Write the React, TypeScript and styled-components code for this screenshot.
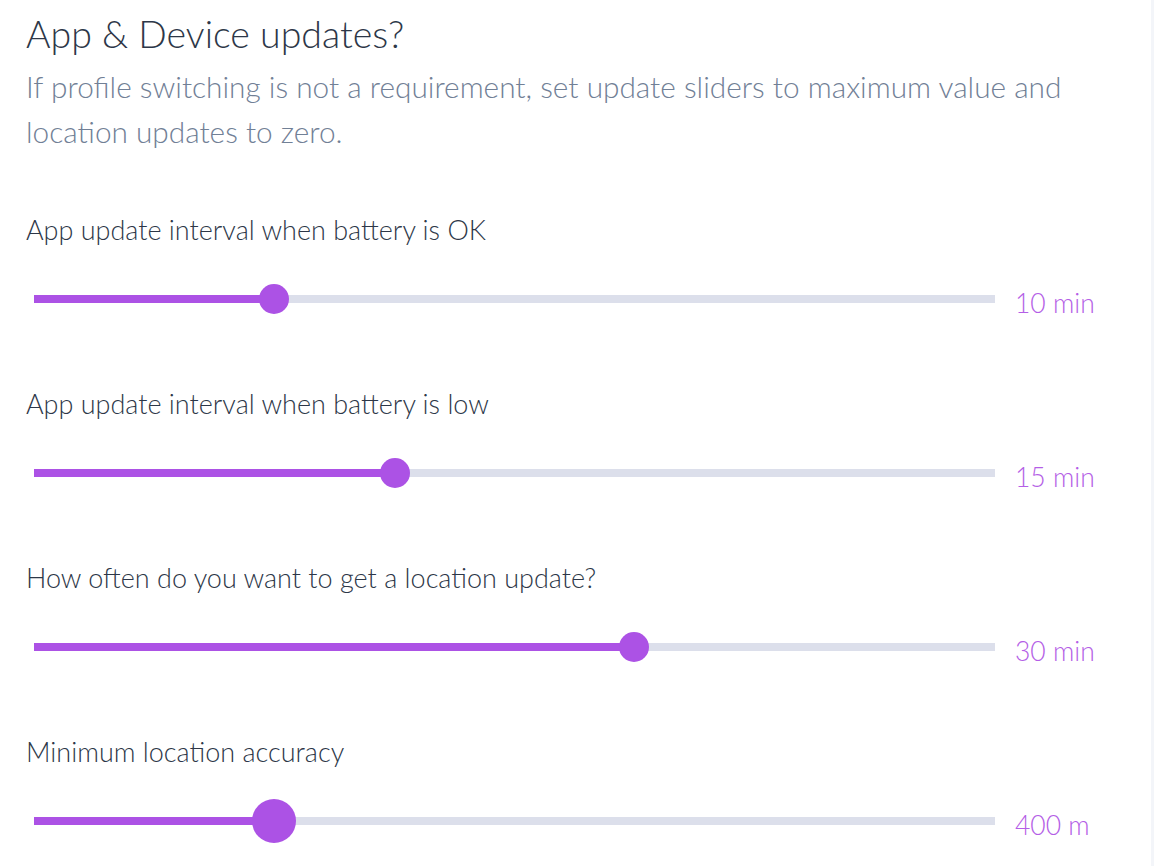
import React from 'react';
import styled, { createGlobalStyle } from 'styled-components';

const GlobalStyle = createGlobalStyle`
  html, body {
    margin: 0;
    padding: 0;
    background: #ffffff;
  }
  body {
    font-family: Lato, "Noto Sans", "Liberation Sans", sans-serif;
    font-weight: 300;
    -webkit-font-smoothing: antialiased;
  }
`;

interface SliderSetting {
  label: string;
  value: string;
  percent: number;
  active?: boolean;
}

const settings: SliderSetting[] = [
  { label: 'App update interval when battery is OK', value: '10 min', percent: 25 },
  { label: 'App update interval when battery is low', value: '15 min', percent: 37.6 },
  { label: 'How often do you want to get a location update?', value: '30 min', percent: 62.4 },
  { label: 'Minimum location accuracy', value: '400 m', percent: 25, active: true },
];

const Page = styled.div`
  display: flex;
  min-height: 866px;
`;

const Panel = styled.section`
  flex: 1;
  padding: 10px 0 0 26px;
`;

const Edge = styled.div`
  width: 3px;
  background: #f3f5f9;
`;

const Title = styled.h2`
  margin: 0;
  font-size: 37.5px;
  font-weight: 300;
  line-height: 48px;
  color: #2d3748;
`;

const Description = styled.p`
  margin: 6px 0 0;
  font-size: 29.8px;
  line-height: 45px;
  color: #718096;
  max-width: 1090px;
`;

const SettingList = styled.div`
  display: flex;
  flex-direction: column;
  gap: 69px;
  margin-top: 60px;
`;

const Setting = styled.div`
  display: flex;
  flex-direction: column;
  gap: 33px;
`;

const Label = styled.label`
  font-size: 27px;
  line-height: 32px;
  color: #2d3748;
`;

const SliderRow = styled.div`
  display: flex;
  align-items: center;
  height: 40px;
  padding-left: 8px;
`;

const Track = styled.div`
  position: relative;
  flex: 1;
  height: 8px;
  background: #dcdfeb;
`;

const Fill = styled.div`
  height: 100%;
  background: #ac52e5;
`;

const Thumb = styled.div<{ $active?: boolean }>`
  position: absolute;
  top: 50%;
  width: ${p => (p.$active ? 44 : 30)}px;
  height: ${p => (p.$active ? 44 : 30)}px;
  border-radius: 50%;
  background: #ac52e5;
  transform: translate(-50%, -50%);
`;

const Value = styled.span`
  width: 136px;
  padding: 8px 0 0 20px;
  font-size: 26.5px;
  line-height: 32px;
  color: #b45ee6;
`;

const App = () => {
  return (
    <Page>
      <GlobalStyle />
      <Panel>
        <Title>App &amp; Device updates?</Title>
        <Description>
          If profile switching is not a requirement, set update sliders to maximum value and
          location updates to zero.
        </Description>
        <SettingList>
          {settings.map(s => (
            <Setting key={s.label}>
              <Label>{s.label}</Label>
              <SliderRow>
                <Track>
                  <Fill style={{ width: `${s.percent}%` }} />
                  <Thumb $active={s.active} style={{ left: `${s.percent}%` }} />
                </Track>
                <Value>{s.value}</Value>
              </SliderRow>
            </Setting>
          ))}
        </SettingList>
      </Panel>
      <Edge />
    </Page>
  );
};

export default App;
